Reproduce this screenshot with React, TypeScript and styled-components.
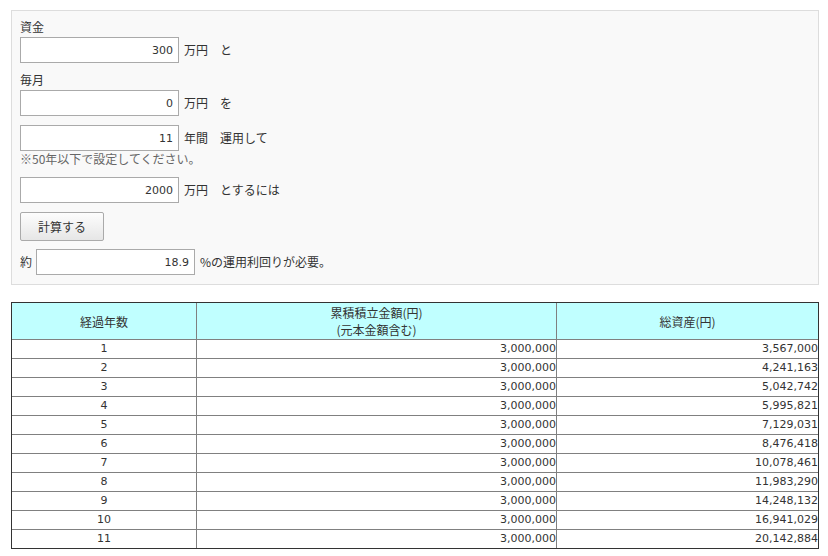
import styled, { createGlobalStyle } from "styled-components";

const GlobalStyle = createGlobalStyle`
  body {
    margin: 0;
    background: #fff;
    color: #333;
    font-family: "Noto Sans CJK JP", sans-serif;
    font-size: 12px;
  }
`;

const Page = styled.div`
  padding: 10px 9px 0 11px;
`;

const Panel = styled.div`
  border: 1px solid #ddd;
  background: #f9f9f9;
  padding: 7px 8px 9px 8px;
  display: flex;
  flex-direction: column;
`;

const Label = styled.div<{ $top?: number }>`
  line-height: 18px;
  margin-top: ${(p) => p.$top ?? 0}px;
  margin-bottom: 1px;
`;

const Row = styled.div<{ $top?: number }>`
  display: flex;
  align-items: center;
  gap: 5px;
  height: 26px;
  margin-top: ${(p) => p.$top ?? 0}px;
  line-height: 18px;
`;

const Prefix = styled.span`
  margin-right: -1px;
`;

const NumInput = styled.input`
  box-sizing: border-box;
  width: 159px;
  height: 26px;
  border: 1px solid #aaa;
  background: #fff;
  color: #333;
  text-align: right;
  padding: 0 5px;
  font-family: "DejaVu Sans", "Noto Sans CJK JP", sans-serif;
  font-size: 11px;
  outline: none;
`;

const Note = styled.div`
  line-height: 15px;
  color: #666;
`;

const Button = styled.button`
  box-sizing: border-box;
  width: 84px;
  height: 29px;
  margin-top: 9px;
  border: 1px solid #aaa;
  border-radius: 2px;
  background: linear-gradient(#fdfdfd, #e6e6e6);
  color: #333;
  font-family: "Noto Sans CJK JP", sans-serif;
  font-size: 12px;
  padding: 0;
  cursor: pointer;
`;

const Table = styled.table`
  margin-top: 17px;
  width: 808px;
  table-layout: fixed;
  border-collapse: separate;
  border-spacing: 0;
  border: 1px solid #333;

  th,
  td {
    padding: 0;
    border-right: 1px solid #808080;
    border-bottom: 1px solid #808080;
  }
  th:last-child,
  td:last-child {
    border-right: none;
  }
  tr:last-child td {
    border-bottom: none;
  }
`;

const HeadCell = styled.th`
  background: #c0ffff;
  height: 36px;
  font-weight: normal;
  line-height: 17px;
  text-align: center;
  color: #333;
`;

const Cell = styled.td<{ $align: "center" | "right" }>`
  height: 18px;
  line-height: 18px;
  text-align: ${(p) => p.$align};
  font-family: "DejaVu Sans", "Noto Sans CJK JP", sans-serif;
  font-size: 11px;
  color: #333;
`;

const totals = [
  "3,567,000",
  "4,241,163",
  "5,042,742",
  "5,995,821",
  "7,129,031",
  "8,476,418",
  "10,078,461",
  "11,983,290",
  "14,248,132",
  "16,941,029",
  "20,142,884",
];

export default function App() {
  return (
    <Page>
      <GlobalStyle />
      <Panel>
        <Label>資金</Label>
        <Row>
          <NumInput defaultValue="300" />
          <span>万円　と</span>
        </Row>
        <Label $top={8}>毎月</Label>
        <Row>
          <NumInput defaultValue="0" />
          <span>万円　を</span>
        </Row>
        <Row $top={9}>
          <NumInput defaultValue="11" />
          <span>年間　運用して</span>
        </Row>
        <Note>※50年以下で設定してください。</Note>
        <Row $top={11}>
          <NumInput defaultValue="2000" />
          <span>万円　とするには</span>
        </Row>
        <div>
          <Button>計算する</Button>
        </div>
        <Row $top={8}>
          <Prefix>約</Prefix>
          <NumInput defaultValue="18.9" />
          <span>%の運用利回りが必要。</span>
        </Row>
      </Panel>
      <Table>
        <colgroup>
          <col style={{ width: 185 }} />
          <col style={{ width: 360 }} />
          <col style={{ width: 261 }} />
        </colgroup>
        <thead>
          <tr>
            <HeadCell>経過年数</HeadCell>
            <HeadCell>
              累積積立金額(円)
              <br />
              (元本金額含む)
            </HeadCell>
            <HeadCell>総資産(円)</HeadCell>
          </tr>
        </thead>
        <tbody>
          {totals.map((total, i) => (
            <tr key={i}>
              <Cell $align="center">{i + 1}</Cell>
              <Cell $align="right">3,000,000</Cell>
              <Cell $align="right">{total}</Cell>
            </tr>
          ))}
        </tbody>
      </Table>
    </Page>
  );
}
